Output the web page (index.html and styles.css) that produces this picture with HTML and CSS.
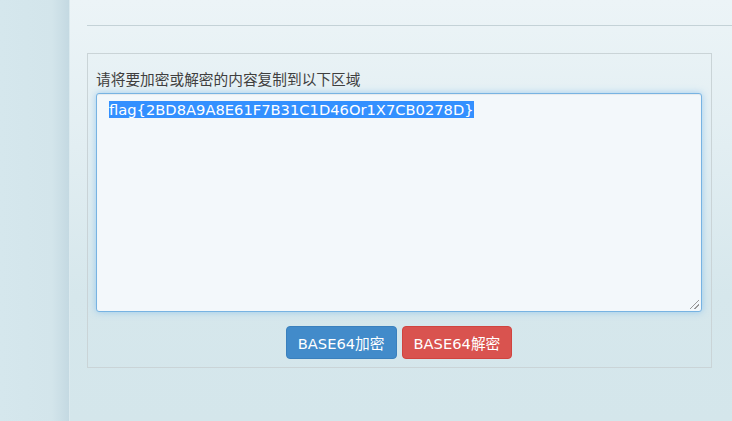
FILE: index.html
```html
<!DOCTYPE html>
<html lang="zh-CN">
<head>
<meta charset="utf-8">
<title>BASE64加密解密</title>
<link rel="stylesheet" href="styles.css">
</head>
<body>
<div class="page">
  <aside class="sidebar"></aside>
  <main class="content">
    <div class="topbar"></div>
    <section class="box">
      <label class="hint" for="src">请将要加密或解密的内容复制到以下区域</label>
      <div class="editor" id="src" role="textbox" aria-multiline="true"><span class="sel">flag{2BD8A9A8E61F7B31C1D46Or1X7CB0278D}</span><span class="grip"></span></div>
      <div class="actions">
        <button class="btn btn-blue" type="button">BASE64加密</button>
        <button class="btn btn-red" type="button">BASE64解密</button>
      </div>
    </section>
  </main>
</div>
</body>
</html>
```
FILE: styles.css
```css
html, body {
  margin: 0;
  height: 100%;
}
body {
  font-family: "DejaVu Sans", "Noto Sans CJK SC", sans-serif;
  font-size: 14.7px;
  color: #444;
  background: #d5e7ec;
  overflow: hidden;
}
.page {
  display: flex;
  height: 421px;
}
.sidebar {
  width: 69px;
  flex: none;
  background: linear-gradient(to right, #d5e7ed 0, #d3e5eb 75%, #c9dde5 92%, #c4d9e2 100%);
}
.content {
  flex: 1;
  padding-left: 17px;
  background: linear-gradient(to bottom, #ecf4f7 0, #e2eef2 35%, #d6e7ec 70%, #d4e6eb 100%);
  border-left: 1px solid #dbeaef;
}
.topbar {
  height: 25px;
  border-bottom: 1px solid #c4d2d7;
  margin-bottom: 27px;
}
.box {
  width: 625px;
  box-sizing: border-box;
  border: 1px solid #cad4d7;
  padding: 15px 9px 8px 8px;
}
.hint {
  display: block;
  line-height: 20px;
  margin-bottom: 4px;
  font-family: "Noto Sans CJK SC", "DejaVu Sans", sans-serif;
  color: #3f3f3f;
}
.editor {
  position: relative;
  height: 219px;
  box-sizing: border-box;
  padding: 6px 12px;
  line-height: 20px;
  background: #f3f8fb;
  border: 1px solid #77b3e2;
  border-radius: 3px;
  box-shadow: inset 0 1px 1px rgba(0, 0, 0, .06), 0 0 7px rgba(102, 175, 233, .55);
  color: #333;
}
.sel {
  background: #3390ff;
  color: #fff;
}
.grip {
  position: absolute;
  right: 2px;
  bottom: 2px;
  width: 9px;
  height: 9px;
  background: linear-gradient(135deg, transparent 0 45%, #999 45% 53%, transparent 53% 70%, #999 70% 78%, transparent 78%);
}
.actions {
  display: flex;
  justify-content: center;
  gap: 5px;
  margin-top: 14px;
}
.btn {
  height: 33px;
  padding: 0 11px;
  border-radius: 4px;
  font-family: "DejaVu Sans", "Noto Sans CJK SC", sans-serif;
  font-size: 14.7px;
  color: #fff;
  cursor: pointer;
}
.btn-blue {
  background: #428bca;
  border: 1px solid #3a80bd;
}
.btn-red {
  background: #d9534f;
  border: 1px solid #d0443f;
}
```
